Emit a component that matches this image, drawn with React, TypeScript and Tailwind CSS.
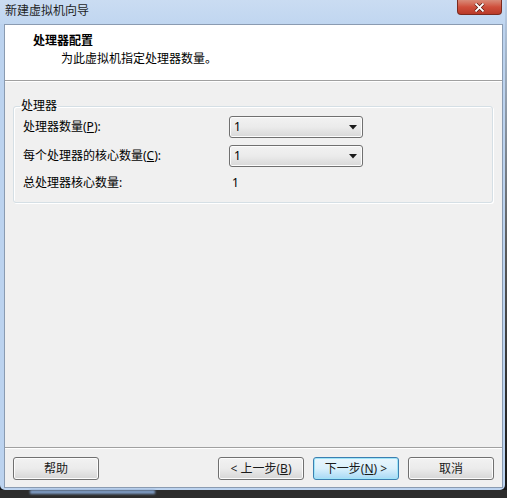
const font = "font-['Noto_Sans','Noto_Sans_CJK_SC',sans-serif]";

function Combo({ value }: { value: string }) {
  return (
    <div className="w-[134px] h-[22px] flex items-center justify-between pl-[4px] pr-[5px] border border-[#707070] rounded-[3px] bg-gradient-to-b from-[#f2f2f2] via-[#ebebeb] to-[#d8d8d8] shadow-[inset_0_0_0_1px_#fcfcfc]">
      <span className="leading-[16px]">{value}</span>
      <svg width="8" height="5" viewBox="0 0 8 5">
        <path d="M0 0 H8 L4 4.5 Z" fill="#1a1a1a" />
      </svg>
    </div>
  );
}

function Button({ children, primary }: { children: React.ReactNode; primary?: boolean }) {
  return (
    <div
      className={
        primary
          ? "w-[86px] h-[23px] flex items-center justify-center rounded-[3px] border border-[#3c7fb1] bg-gradient-to-b from-[#eaf6fd] via-[#d9f0fc] to-[#a7d9f5] shadow-[inset_0_0_0_1px_#9fe5f8]"
          : "w-[86px] h-[23px] flex items-center justify-center rounded-[3px] border border-[#707070] bg-gradient-to-b from-[#f2f2f2] via-[#ebebeb] to-[#d6d6d6] shadow-[inset_0_0_0_1px_#fcfcfc]"
      }
    >
      <span className="leading-[16px] text-[#1a1a1a]">{children}</span>
    </div>
  );
}

export default function App() {
  return (
    <div className={`w-[507px] h-[498px] overflow-hidden flex flex-col bg-gradient-to-b from-[#b9cfe9] via-[#5a5a5a] to-[#141414] text-[12px] text-black ${font}`}>
      <div className="h-[490px] w-[505px] flex flex-col bg-[#bcd3ef] rounded-b-[5px]">
        {/* Title bar */}
        <div className="h-[24px] flex items-start justify-between bg-gradient-to-b from-[#cadcf2] to-[#c0d6f0]">
          <span className="pl-[5px] pt-[3px] leading-[16px] text-[#1e1e1e]">新建虚拟机向导</span>
          <div className="w-[45px] h-[15px] mr-[3px] flex items-center justify-center rounded-b-[4px] border border-t-0 border-[#7a2a1e] bg-gradient-to-b from-[#d88a78] via-[#cf4f3c] to-[#b93a28]">
            <svg width="11" height="9" viewBox="0 0 11 9">
              <path d="M1.5 0.5 L9.5 8.5 M9.5 0.5 L1.5 8.5" stroke="#5a1a12" strokeWidth="3.2" />
              <path d="M1.5 0.5 L9.5 8.5 M9.5 0.5 L1.5 8.5" stroke="#ffffff" strokeWidth="1.8" />
            </svg>
          </div>
        </div>

        {/* Client area */}
        <div className="flex-1 flex flex-col ml-[4px] mr-[2px] mb-[2px] border border-[#8a9bb1] bg-[#f0f0f0]">
          {/* Header */}
          <div className="h-[56px] bg-white border-b border-[#a0a0a0] pt-[8px]">
            <div className="pl-[28px] leading-[16px] font-bold">处理器配置</div>
            <div className="pl-[56px] mt-[2px] leading-[16px]">为此虚拟机指定处理器数量。</div>
          </div>

          {/* Body */}
          <div className="flex-1 flex flex-col border-t border-white pt-[16px]">
            <fieldset className="ml-[8px] mr-[9px] px-[6px] pb-[10px] border border-[#d5dfe5] rounded-[3px] shadow-[inset_1px_1px_0_#ffffff,1px_1px_0_#ffffff]">
              <legend className="px-[1px] leading-[16px]">处理器</legend>
              <div className="flex flex-col gap-[7px] pl-[3px] mt-[2px]">
                <div className="flex items-center">
                  <span className="w-[206px] leading-[16px]">
                    处理器数量(<span className="underline">P</span>):
                  </span>
                  <Combo value="1" />
                </div>
                <div className="flex items-center">
                  <span className="w-[206px] leading-[16px]">
                    每个处理器的核心数量(<span className="underline">C</span>):
                  </span>
                  <Combo value="1" />
                </div>
                <div className="flex items-center h-[18px]">
                  <span className="w-[209px] leading-[16px]">总处理器核心数量:</span>
                  <span className="leading-[16px]">1</span>
                </div>
              </div>
            </fieldset>
          </div>

          {/* Footer */}
          <div className="h-[40px] border-t border-[#a0a0a0] shadow-[inset_0_1px_0_#ffffff] flex items-start justify-between pt-[9px] pl-[8px] pr-[8px]">
            <Button>帮助</Button>
            <div className="flex gap-[9px]">
              <Button>
                &lt; 上一步(<span className="underline">B</span>)
              </Button>
              <Button primary>
                下一步(<span className="underline">N</span>) &gt;
              </Button>
              <Button>取消</Button>
            </div>
          </div>
        </div>
      </div>

      {/* Background window peeking below */}
      <div className="flex-1 flex items-start bg-[#2c2c2c]">
        <div className="ml-[30px] w-[125px] h-[4px] bg-[#7f9cc4] blur-[1px]" />
      </div>
    </div>
  );
}
